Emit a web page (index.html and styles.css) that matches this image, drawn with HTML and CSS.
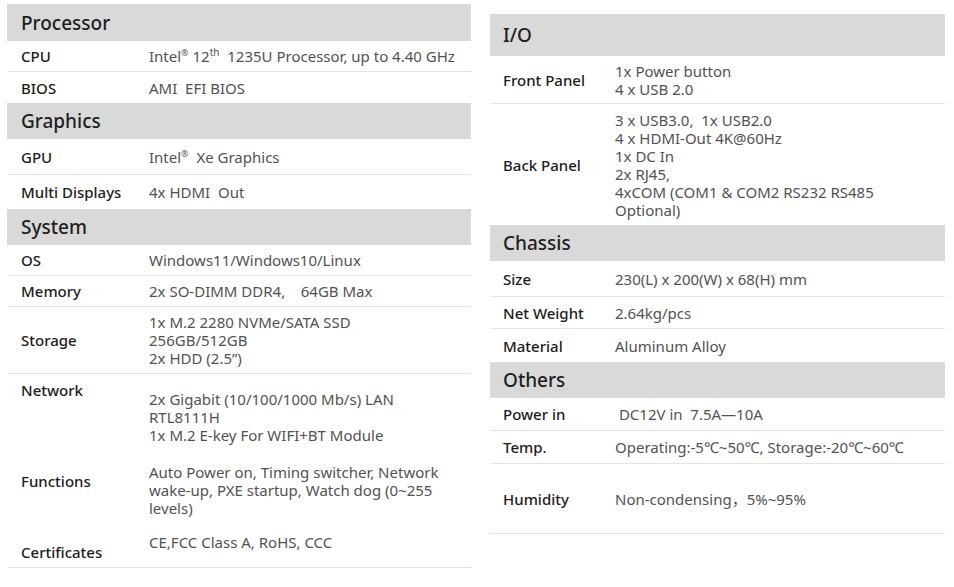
FILE: index.html
```html
<!DOCTYPE html>
<html>
<head>
<meta charset="utf-8">
<link rel="stylesheet" href="styles.css">
</head>
<body>
<div class="page">
  <section class="col col-left">
    <div class="head h37">Processor</div>
    <div class="row r31 line"><div class="k">CPU</div><div class="v">Intel<sup class="reg">®</sup> 12<sup class="th">th</sup>&nbsp; 1235U Processor, up to 4.40 GHz</div></div>
    <div class="row r31"><div class="k">BIOS</div><div class="v">AMI&nbsp; EFI BIOS</div></div>
    <div class="head h36">Graphics</div>
    <div class="row r36 line"><div class="k">GPU</div><div class="v">Intel<sup class="reg">®</sup>&nbsp; Xe Graphics</div></div>
    <div class="row r34"><div class="k">Multi Displays</div><div class="v">4x HDMI&nbsp; Out</div></div>
    <div class="head h36">System</div>
    <div class="row r31 line"><div class="k">OS</div><div class="v">Windows11/Windows10/Linux</div></div>
    <div class="row r31 line"><div class="k">Memory</div><div class="v">2x SO-DIMM DDR4,&nbsp;&nbsp;&nbsp; 64GB Max</div></div>
    <div class="row r67 line"><div class="k">Storage</div><div class="v">1x M.2 2280 NVMe/SATA SSD<br>256GB/512GB<br>2x HDD (2.5’’)</div></div>
    <div class="row top r80"><div class="k pk7">Network</div><div class="v pv16">2x Gigabit (10/100/1000 Mb/s) LAN<br>RTL8111H<br>1x M.2 E-key For WIFI+BT Module</div></div>
    <div class="row top r71"><div class="k pk18">Functions</div><div class="v pv9">Auto Power on, Timing switcher, Network wake-up, PXE startup, Watch dog (0~255 levels)</div></div>
    <div class="row top r43 line"><div class="k pk18">Certificates</div><div class="v pv8">CE,FCC Class A, RoHS, CCC</div></div>
  </section>
  <section class="col col-right">
    <div class="head h42">I/O</div>
    <div class="row r48 line"><div class="k">Front Panel</div><div class="v">1x Power button<br>4 x USB 2.0</div></div>
    <div class="row r121"><div class="k">Back Panel</div><div class="v">3 x USB3.0,&nbsp; 1x USB2.0<br>4 x HDMI-Out 4K@60Hz<br>1x DC In<br>2x RJ45,<br>4xCOM (COM1 &amp; COM2 RS232 RS485 Optional)</div></div>
    <div class="head h36">Chassis</div>
    <div class="row r36 line"><div class="k">Size</div><div class="v">230(L) x 200(W) x 68(H) mm</div></div>
    <div class="row r32 line"><div class="k">Net Weight</div><div class="v">2.64kg/pcs</div></div>
    <div class="row r33"><div class="k">Material</div><div class="v">Aluminum Alloy</div></div>
    <div class="head h36">Others</div>
    <div class="row r33 line"><div class="k">Power in</div><div class="v">&nbsp;DC12V in&nbsp; 7.5A—10A</div></div>
    <div class="row r33 line"><div class="k">Temp.</div><div class="v nowrap">Operating:-5℃~50℃, Storage:-20℃~60℃</div></div>
    <div class="row r70 line"><div class="k">Humidity</div><div class="v">Non-condensing，5%~95%</div></div>
  </section>
</div>
</body>
</html>
```

FILE: styles.css
```css
* { box-sizing: border-box; }
html, body { margin: 0; padding: 0; background: #fff; }
body {
  font-family: "Noto Sans", "DejaVu Sans", "Noto Sans CJK SC", sans-serif;
  font-size: 15px;
  line-height: 18px;
  color: #1c1c1c;
}
.page {
  display: grid;
  grid-template-columns: 464px 455px;
  column-gap: 19px;
  padding: 4px 0 0 7px;
  align-items: start;
}
.col-right { margin-top: 10px; }
.head {
  background: #d9d9d9;
  font-size: 19px;
  font-weight: 500;
  color: #1e1e1e;
  display: flex;
  align-items: center;
}
.col-left .head { padding-left: 14px; }
.col-right .head { padding-left: 13px; }
.row {
  display: grid;
  align-items: center;
}
.col-left .row { grid-template-columns: 128px 1fr; padding-left: 13px; margin-left: 1px; }
.col-right .row { grid-template-columns: 112px 1fr; padding-left: 13px; }
.row.line { border-bottom: 1px solid #e4e4e4; }
.row.top { align-items: start; }
.k { color: #1c1c1c; font-weight: 500; }
.v { color: #525252; }
.col-right .v { padding-right: 24px; }
.nowrap { white-space: nowrap; }
sup { line-height: 0; }
.reg { font-size: 9px; vertical-align: 6px; }
.th { font-size: 10px; vertical-align: 6px; }

.h37 { height: 37px; }
.h36 { height: 36px; }
.h42 { height: 42px; }
.r31 { height: 31px; }
.r32 { height: 32px; }
.r33 { height: 33px; }
.r34 { height: 34px; }
.r36 { height: 36px; }
.r43 { height: 43px; }
.r48 { height: 48px; }
.r67 { height: 67px; }
.r70 { height: 70px; }
.r71 { height: 71px; }
.r80 { height: 80px; }
.r121 { height: 121px; }
.pk7 { padding-top: 7px; }
.pk18 { padding-top: 18px; }
.pv16 { padding-top: 16px; }
.pv9 { padding-top: 9px; }
.pv8 { padding-top: 8px; }
```
